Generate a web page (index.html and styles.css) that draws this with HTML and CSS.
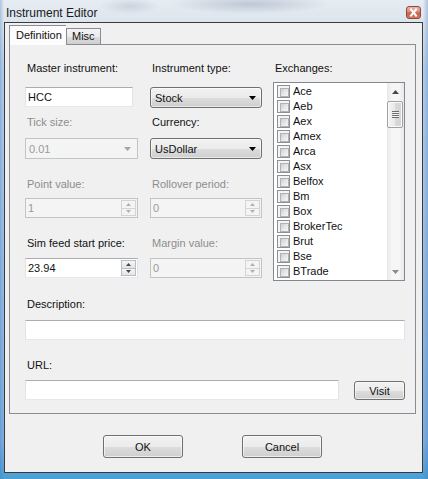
FILE: index.html
```html
<!DOCTYPE html>
<html>
<head>
<meta charset="utf-8">
<title>Instrument Editor</title>
<link rel="stylesheet" href="styles.css">
</head>
<body>
<div class="window">
  <div class="titlebar">
    <span class="title">Instrument Editor</span>
    <span class="close"><svg width="15" height="13" viewBox="0 0 15 13"><path d="M5 3.5 L10 9.5 M10 3.5 L5 9.5" stroke="#fff" stroke-width="2" stroke-linecap="square"/></svg></span>
  </div>
  <div class="client">
    <div class="tabs">
      <div class="tab active">Definition</div>
      <div class="tab">Misc</div>
    </div>
    <div class="panel">
      <div class="top">
        <div class="fields">
          <div class="field r1">
            <div class="label">Master instrument:</div>
            <div class="textbox w-text">HCC</div>
          </div>
          <div class="field r1">
            <div class="label">Instrument type:</div>
            <div class="combo"><span>Stock</span><svg class="arrow" width="7" height="4" viewBox="0 0 7 4"><path d="M0 0 H7 L3.5 4 Z" fill="#000"/></svg></div>
          </div>
          <div class="field r2">
            <div class="label disabled">Tick size:</div>
            <div class="combo-dis"><span>0.01</span><svg class="arrow" width="7" height="4" viewBox="0 0 7 4"><path d="M0 0 H7 L3.5 4 Z" fill="#a6a6a6"/></svg></div>
          </div>
          <div class="field r2">
            <div class="label">Currency:</div>
            <div class="combo"><span>UsDollar</span><svg class="arrow" width="7" height="4" viewBox="0 0 7 4"><path d="M0 0 H7 L3.5 4 Z" fill="#000"/></svg></div>
          </div>
          <div class="field r3">
            <div class="label disabled">Point value:</div>
            <div class="spin disabled"><span class="val">1</span><span class="spin-btns"><span class="sb"><svg width="5" height="3" viewBox="0 0 5 3"><path d="M0 3 H5 L2.5 0 Z" fill="#b0b0b0"/></svg></span><span class="sb"><svg width="5" height="3" viewBox="0 0 5 3"><path d="M0 0 H5 L2.5 3 Z" fill="#b0b0b0"/></svg></span></span></div>
          </div>
          <div class="field r3">
            <div class="label disabled">Rollover period:</div>
            <div class="spin disabled"><span class="val">0</span><span class="spin-btns"><span class="sb"><svg width="5" height="3" viewBox="0 0 5 3"><path d="M0 3 H5 L2.5 0 Z" fill="#b0b0b0"/></svg></span><span class="sb"><svg width="5" height="3" viewBox="0 0 5 3"><path d="M0 0 H5 L2.5 3 Z" fill="#b0b0b0"/></svg></span></span></div>
          </div>
          <div class="field r4">
            <div class="label">Sim feed start price:</div>
            <div class="spin"><span class="val">23.94</span><span class="spin-btns"><span class="sb"><svg width="5" height="3" viewBox="0 0 5 3"><path d="M0 3 H5 L2.5 0 Z" fill="#444"/></svg></span><span class="sb"><svg width="5" height="3" viewBox="0 0 5 3"><path d="M0 0 H5 L2.5 3 Z" fill="#444"/></svg></span></span></div>
          </div>
          <div class="field r4">
            <div class="label disabled">Margin value:</div>
            <div class="spin disabled"><span class="val">0</span><span class="spin-btns"><span class="sb"><svg width="5" height="3" viewBox="0 0 5 3"><path d="M0 3 H5 L2.5 0 Z" fill="#b0b0b0"/></svg></span><span class="sb"><svg width="5" height="3" viewBox="0 0 5 3"><path d="M0 0 H5 L2.5 3 Z" fill="#b0b0b0"/></svg></span></span></div>
          </div>
        </div>
        <div class="exchanges">
          <div class="label">Exchanges:</div>
          <div class="listbox">
            <div class="items">
              <div class="item"><span class="cb"></span>Ace</div>
              <div class="item"><span class="cb"></span>Aeb</div>
              <div class="item"><span class="cb"></span>Aex</div>
              <div class="item"><span class="cb"></span>Amex</div>
              <div class="item"><span class="cb"></span>Arca</div>
              <div class="item"><span class="cb"></span>Asx</div>
              <div class="item"><span class="cb"></span>Belfox</div>
              <div class="item"><span class="cb"></span>Bm</div>
              <div class="item"><span class="cb"></span>Box</div>
              <div class="item"><span class="cb"></span>BrokerTec</div>
              <div class="item"><span class="cb"></span>Brut</div>
              <div class="item"><span class="cb"></span>Bse</div>
              <div class="item"><span class="cb"></span>BTrade</div>
            </div>
            <div class="scrollbar">
              <div class="sarrow"><svg width="7" height="4" viewBox="0 0 7 4"><path d="M0 4 H7 L3.5 0 Z" fill="#4a4a4a"/></svg></div>
              <div class="thumb"><span class="grip"></span></div>
              <div class="track"></div>
              <div class="sarrow"><svg width="7" height="4" viewBox="0 0 7 4"><path d="M0 0 H7 L3.5 4 Z" fill="#8a8a8a"/></svg></div>
            </div>
          </div>
        </div>
      </div>
      <div class="desc">
        <div class="label">Description:</div>
        <div class="textbox full"></div>
      </div>
      <div class="url">
        <div class="label">URL:</div>
        <div class="url-row">
          <div class="textbox w-url"></div>
          <div class="btn visit">Visit</div>
        </div>
      </div>
    </div>
    <div class="buttons">
      <div class="btn dlg">OK</div>
      <div class="btn dlg">Cancel</div>
    </div>
  </div>
</div>
</body>
</html>
```

FILE: styles.css
```css
* { box-sizing: border-box; }
html, body { margin: 0; padding: 0; }
body {
  width: 428px;
  height: 479px;
  overflow: hidden;
  font-family: "Liberation Sans", Arial, sans-serif;
  font-size: 11px;
  color: #111;
}
.window {
  width: 428px;
  height: 479px;
  display: flex;
  flex-direction: column;
  padding: 0 5px 6px 4px;
  background:
    radial-gradient(ellipse 80px 10px at 250px 4px, rgba(90,110,140,0.28), rgba(90,110,140,0) 100%),
    radial-gradient(ellipse 30px 8px at 130px 6px, rgba(90,110,140,0.18), rgba(90,110,140,0) 100%),
    linear-gradient(90deg, rgba(70,120,190,0.35) 0, rgba(255,255,255,0) 4px, rgba(255,255,255,0) 423px, rgba(70,120,190,0.35) 428px),
    linear-gradient(180deg, #e6ecf2 0, #dde5ee 20px, #b7d0ea 70px, #9cc0e6 250px, #7fb0e0 440px, #4a9fd4 479px);
}
.titlebar {
  height: 22px;
  display: flex;
  justify-content: space-between;
  align-items: flex-start;
  padding: 6px 2px 0 2px;
}
.title {
  font-size: 12px;
  line-height: 14px;
  color: #1a1a1a;
}
.close {
  width: 15px;
  height: 13px;
  border: 1px solid #8c4a3c;
  border-radius: 3px;
  background: linear-gradient(180deg, #e9b3a6 0, #d98a76 45%, #c8604a 55%, #d47a62 100%);
  display: flex;
}
.close svg { display: block; margin: -1px; }
.client {
  flex: 1;
  border: 1px solid #3a3a3a;
  background: #f0f0f0;
  padding: 2px 6px 0 4px;
  display: flex;
  flex-direction: column;
}
.tabs {
  display: flex;
  align-items: flex-end;
  height: 19px;
  position: relative;
  z-index: 1;
}
.tab {
  height: 16px;
  border: 1px solid #898c95;
  border-bottom: none;
  padding: 0 5px;
  line-height: 15px;
  background: linear-gradient(180deg, #f3f3f3 0, #ebebeb 50%, #dddddd 51%, #cfcfcf 100%);
}
.tab.active {
  height: 20px;
  margin-bottom: -1px;
  background: #fcfcfc;
  line-height: 19px;
  border-right: none;
  padding: 0 5px 0 6px;
  width: 57px;
}
.panel {
  height: 370px;
  border: 1px solid #898c95;
  background: #f0f0f0;
  padding: 16px 10px 0 15px;
}
.top {
  display: flex;
  align-items: flex-start;
}
.fields {
  width: 237px;
  display: grid;
  grid-template-columns: 113px 112px;
  column-gap: 12px;
  grid-template-rows: 54px 62px 59px auto;
  align-items: start;
}
.label {
  height: 14px;
  line-height: 14px;
  padding-left: 2px;
  white-space: nowrap;
}
.label.disabled { color: #8d8d8d; }
.r1 .label + * { margin-top: 12px; }
.r2 .label + * { margin-top: 9px; }
.r3 .label + * { margin-top: 7px; }
.r4 .label + * { margin-top: 8px; }
.textbox {
  height: 20px;
  border: 1px solid;
  border-color: #abadb3 #e2e3ea #e3e9ef #e2e3ea;
  background: #fff;
  padding: 0 2px;
  line-height: 18px;
}
.w-text { width: 108px; }
.combo {
  height: 21px;
  border: 1px solid #707070;
  border-radius: 3px;
  background: linear-gradient(180deg, #f2f2f2 0, #ebebeb 50%, #dddddd 51%, #cfcfcf 100%);
  box-shadow: inset 0 0 0 1px rgba(255,255,255,0.55);
  display: flex;
  align-items: center;
  justify-content: space-between;
  padding: 0 5px 0 4px;
}
.combo-dis {
  height: 21px;
  border: 1px solid #c2c5c8;
  background: #f4f4f4;
  color: #9a9a9a;
  display: flex;
  align-items: center;
  justify-content: space-between;
  padding: 0 6px 0 3px;
}
.arrow { display: block; }
.spin {
  height: 20px;
  border: 1px solid;
  border-color: #abadb3 #e2e3ea #e3e9ef #e2e3ea;
  background: #fff;
  display: flex;
  padding: 1px;
}
.spin .val {
  flex: 1;
  line-height: 16px;
  padding-left: 1px;
}
.spin-btns {
  width: 15px;
  display: flex;
  flex-direction: column;
}
.sb {
  flex: 1;
  display: flex;
  align-items: center;
  justify-content: center;
  border: 1px solid #b8bec6;
  background: linear-gradient(180deg, #f6f6f6, #e4e4e4);
}
.sb + .sb { border-top: none; }
.sb svg { display: block; }
.spin.disabled {
  background: #f4f4f4;
  border-color: #c2c5c8;
  color: #9a9a9a;
}
.spin.disabled .sb {
  border-color: #d2d4d6;
  background: #f4f4f4;
}
.exchanges {
  margin-left: 11px;
  width: 132px;
}
.listbox {
  margin-top: 7px;
  height: 199px;
  border: 1px solid #828790;
  background: #fff;
  display: flex;
}
.items {
  flex: 1;
  padding: 1px 0 0 3px;
  overflow: hidden;
}
.item {
  height: 15px;
  display: flex;
  align-items: center;
  line-height: 15px;
  white-space: nowrap;
}
.cb {
  width: 13px;
  height: 13px;
  border: 1px solid #8e8f8f;
  background: #f4f4f4;
  padding: 2px;
  margin-right: 3px;
  flex: none;
}
.cb::after {
  content: "";
  display: block;
  width: 7px;
  height: 7px;
  border: 1px solid #aeb3b9;
  background: linear-gradient(135deg, #cbcfd5 0, #e4e6e8 50%, #f7f7f7 100%);
}
.scrollbar {
  width: 17px;
  display: flex;
  flex-direction: column;
  background: linear-gradient(90deg, #e8e8e8 0, #f6f6f6 30%, #f6f6f6 70%, #e8e8e8 100%);
}
.sarrow {
  height: 17px;
  display: flex;
  align-items: center;
  justify-content: center;
}
.thumb {
  height: 27px;
  margin: 1px 1px 0 0;
  border: 1px solid #a0a0a0;
  border-radius: 2px;
  background: linear-gradient(90deg, #f4f4f4 0, #e9e9e9 50%, #d9d9d9 51%, #d4d4d4 100%);
  box-shadow: inset 0 0 0 1px #fbfbfb;
  display: flex;
  align-items: center;
  justify-content: center;
}
.grip {
  width: 7px;
  height: 7px;
  background: repeating-linear-gradient(180deg, #6e6e6e 0, #6e6e6e 1px, #f4f4f4 1px, #f4f4f4 2px);
}
.track { flex: 1; }
.desc { margin-top: 16px; }
.desc .textbox { margin-top: 9px; }
.full { width: 380px; }
.url { margin-top: 18px; }
.url-row {
  margin-top: 8px;
  width: 380px;
  display: flex;
  justify-content: space-between;
  align-items: flex-start;
}
.w-url { width: 314px; }
.btn {
  border: 1px solid #707070;
  border-radius: 3px;
  background: linear-gradient(180deg, #f2f2f2 0, #ebebeb 50%, #dddddd 51%, #cfcfcf 100%);
  box-shadow: inset 0 0 0 1px rgba(255,255,255,0.6);
  display: flex;
  align-items: center;
  justify-content: center;
}
.visit {
  width: 51px;
  height: 19px;
  margin-top: 1px;
}
.buttons {
  margin-top: 21px;
  display: flex;
  justify-content: center;
  gap: 59px;
}
.dlg {
  width: 80px;
  height: 23px;
}
```
